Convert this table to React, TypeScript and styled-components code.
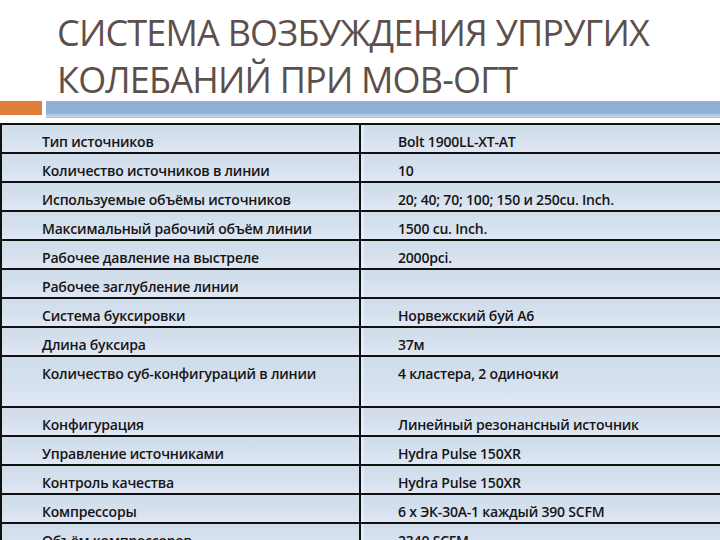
import React from "react";
import styled, { createGlobalStyle } from "styled-components";

const GlobalStyle = createGlobalStyle`
  html, body {
    margin: 0;
    padding: 0;
    background: #ffffff;
  }
  body {
    font-family: "Open Sans", "Liberation Sans", sans-serif;
  }
`;

const Slide = styled.div`
  width: 720px;
  height: 540px;
  overflow: hidden;
  background: #ffffff;
`;

const Header = styled.header`
  height: 101px;
  box-sizing: border-box;
  padding: 9px 0 0 57px;
`;

const Title = styled.h1`
  margin: 0;
  font-family: "Open Sans", "Liberation Sans", sans-serif;
  font-weight: 400;
  font-size: 36px;
  line-height: 47px;
  letter-spacing: -0.8px;
  color: #5d4f4b;
  white-space: nowrap;
`;

const Band = styled.div`
  display: flex;
  gap: 4px;
  height: 17px;
`;

const Accent = styled.div`
  width: 42px;
  height: 14px;
  background: #de7e3d;
`;

const Stripe = styled.div`
  flex: 1;
  height: 17px;
  background: linear-gradient(
    #9fb4c9 0,
    #8fb0d5 10%,
    #8fb0d5 70%,
    #b7cbe2 82%,
    #c9d6e4 92%,
    #a9b4bf 100%
  );
`;

const Table = styled.div`
  margin-top: 5px;
  width: 760px;
  border-top: 2px solid #111;
  border-left: 2px solid #111;
`;

const Row = styled.div<{ $tall?: boolean }>`
  display: grid;
  grid-template-columns: 359px 1fr;
  height: ${(p) => (p.$tall ? "51px" : "29px")};
  box-sizing: border-box;
  border-bottom: 2px solid #111;
  background: linear-gradient(#cfdcea 0%, #d6e1ee 55%, #e0e7f5 100%);
`;

const Cell = styled.div<{ $first?: boolean }>`
  padding: 6px 0 0 ${(p) => (p.$first ? "40px" : "37px")};
  border-right: ${(p) => (p.$first ? "2px solid #111" : "none")};
  box-shadow: ${(p) => (p.$first ? "none" : "inset 3px 0 0 rgba(255, 255, 255, 0.35)")};
  font-size: 14px;
  font-weight: 600;
  line-height: 22px;
  letter-spacing: -0.2px;
  color: #151515;
  white-space: nowrap;
  overflow: hidden;
`;

const rows: { name: string; value: string; tall?: boolean }[] = [
  { name: "Тип источников", value: "Bolt 1900LL-XT-AT" },
  { name: "Количество источников в линии", value: "10" },
  { name: "Используемые объёмы источников", value: "20; 40; 70; 100; 150 и 250cu. Inch." },
  { name: "Максимальный рабочий объём линии", value: "1500 cu. Inch." },
  { name: "Рабочее давление на выстреле", value: "2000pci." },
  { name: "Рабочее заглубление линии", value: "" },
  { name: "Система буксировки", value: "Норвежский буй А6" },
  { name: "Длина буксира", value: "37м" },
  { name: "Количество суб-конфигураций в линии", value: "4 кластера, 2 одиночки", tall: true },
  { name: "Конфигурация", value: "Линейный резонансный источник" },
  { name: "Управление источниками", value: "Hydra Pulse 150XR" },
  { name: "Контроль качества", value: "Hydra Pulse 150XR" },
  { name: "Компрессоры", value: "6 х ЭК-30А-1 каждый 390 SCFM" },
  { name: "Объём компрессоров", value: "2340 SCFM" },
];

const App = () => {
  return (
    <>
      <GlobalStyle />
      <Slide>
        <Header>
          <Title>
            СИСТЕМА ВОЗБУЖДЕНИЯ УПРУГИХ
            <br />
            КОЛЕБАНИЙ ПРИ МОВ-ОГТ
          </Title>
        </Header>
        <Band>
          <Accent />
          <Stripe />
        </Band>
        <Table>
          {rows.map((r) => (
            <Row key={r.name} $tall={r.tall}>
              <Cell $first>{r.name}</Cell>
              <Cell>{r.value}</Cell>
            </Row>
          ))}
        </Table>
      </Slide>
    </>
  );
};

export default App;
